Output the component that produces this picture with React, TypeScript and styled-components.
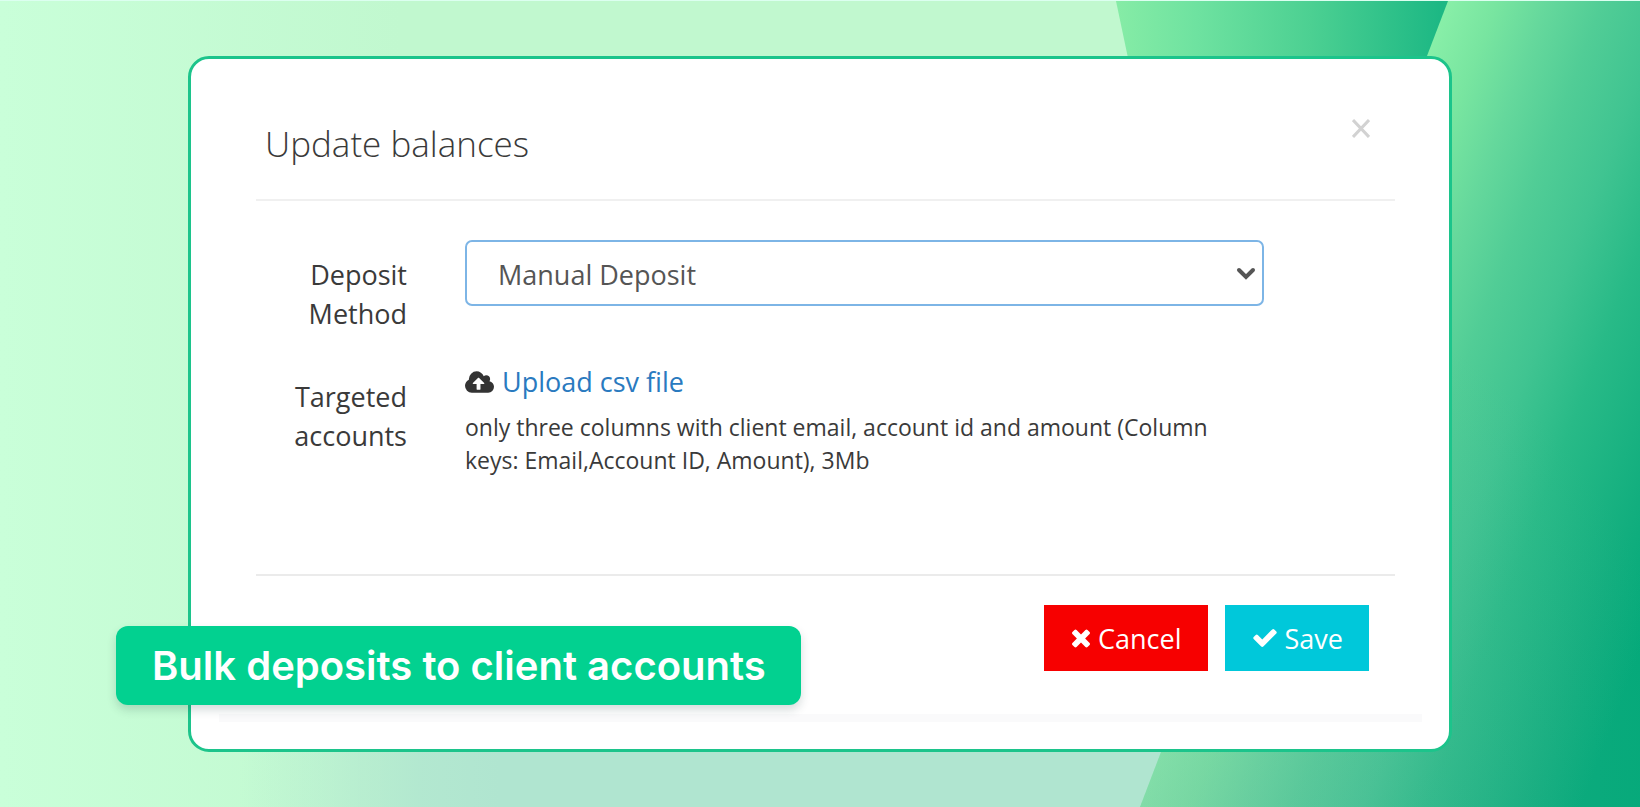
import React from "react";
import styled, { createGlobalStyle } from "styled-components";

const GlobalStyle = createGlobalStyle`
  *, *::before, *::after { box-sizing: border-box; }
  body { margin: 0; background: #c5fbd3; }
`;

const sans = `"Open Sans", "Noto Sans", sans-serif`;

const Page = styled.main`
  position: relative;
  min-height: 100vh;
  padding: 55px 188px;
  border-top: 1px solid #dcfff0;
  font-family: ${sans};
  color: #3a3a3a;
`;

const Backdrop = styled.svg`
  position: absolute;
  inset: 0;
  width: 100%;
  height: 100%;
`;

const Dialog = styled.section`
  position: relative;
  background: #ffffff;
  border: 3px solid #1cc48b;
  border-radius: 21px;
`;

const Sheet = styled.form`
  padding: 0 54px 0 65px;
`;

const Header = styled.header`
  display: flex;
  justify-content: space-between;
  align-items: flex-start;
  padding: 60px 25px 32px 9px;
  border-bottom: 2px solid #f0f0f0;
`;

const Title = styled.h1`
  margin: 0;
  font-size: 35px;
  line-height: 50px;
  margin-bottom: -2px;
  font-weight: 300;
`;

const CloseButton = styled.button`
  display: flex;
  padding: 0;
  border: 0;
  background: none;
  color: #d2d2d2;
  cursor: pointer;
`;

const Fields = styled.div`
  display: grid;
  grid-template-columns: 151px minmax(0, 1fr);
  column-gap: 58px;
  row-gap: 29px;
  padding: 39px 131px 97px 0;
`;

const Label = styled.label`
  padding-top: 15px;
  font-size: 27px;
  line-height: 39px;
  text-align: right;
`;

const SelectBox = styled.div`
  position: relative;
  height: 66px;
`;

const Select = styled.select`
  appearance: none;
  width: 100%;
  height: 66px;
  padding: 2px 48px 0 31px;
  border: 2px solid #7db5e6;
  border-radius: 7px;
  background: #ffffff;
  color: #555555;
  font-family: ${sans};
  font-size: 27px;
  outline: none;
`;

const Chevron = styled.svg`
  position: absolute;
  top: 27px;
  right: 8px;
  pointer-events: none;
`;

const UploadLine = styled.div`
  display: flex;
  align-items: center;
  gap: 8px;
  font-size: 27px;
  line-height: 39px;
`;

const UploadLink = styled.a`
  color: #2a7abf;
  text-decoration: none;
`;

const Hint = styled.p`
  margin: 10px 0 0;
  font-size: 23px;
  line-height: 33px;
`;

const Footer = styled.footer`
  display: flex;
  justify-content: flex-end;
  gap: 17px;
  padding: 29px 26px 43px;
  border-top: 2px solid #ebebeb;
`;

const Button = styled.button<{ $color: string }>`
  display: flex;
  align-items: center;
  gap: 8px;
  height: 66px;
  padding: 0 26px 0 28px;
  border: 0;
  background: ${(p) => p.$color};
  color: #ffffff;
  font-family: ${sans};
  font-size: 27px;
  cursor: pointer;
`;

const Strip = styled.div`
  height: 8px;
  margin: 0 27px 27px 28px;
  background: #fafafb;
`;

const Banner = styled.div`
  position: absolute;
  left: -75px;
  bottom: 44px;
  padding: 16px 35px 15px 36px;
  border-radius: 12px;
  background: #02d190;
  box-shadow: 0 5px 10px rgba(30, 60, 60, 0.18);
  color: #ffffff;
  font-family: Inter, sans-serif;
  font-size: 40px;
  line-height: 48px;
  font-weight: 600;
  white-space: nowrap;
`;

function Background() {
  return (
    <Backdrop viewBox="0 0 1640 807" preserveAspectRatio="none" aria-hidden="true">
      <defs>
        <linearGradient id="mint" gradientUnits="userSpaceOnUse" x1="0" y1="0" x2="400" y2="0">
          <stop offset="0" stopColor="#c9ffd9" />
          <stop offset="1" stopColor="#c1f8cf" />
        </linearGradient>
        <linearGradient id="mist" gradientUnits="userSpaceOnUse" x1="240" y1="0" x2="500" y2="0">
          <stop offset="0" stopColor="#b0e5d0" stopOpacity="0" />
          <stop offset="0.35" stopColor="#b0e5d0" stopOpacity="0.4" />
          <stop offset="0.7" stopColor="#b0e5d0" stopOpacity="0.85" />
          <stop offset="1" stopColor="#b0e5d0" />
        </linearGradient>
        <linearGradient id="band" gradientUnits="userSpaceOnUse" x1="1116" y1="0" x2="1440" y2="0">
          <stop offset="0" stopColor="#86eca6" />
          <stop offset="0.25" stopColor="#6ee2a0" />
          <stop offset="0.6" stopColor="#4cd092" />
          <stop offset="1" stopColor="#1db884" />
        </linearGradient>
        <linearGradient id="panel" gradientUnits="userSpaceOnUse" x1="1448" y1="0" x2="1885" y2="166">
          <stop offset="0" stopColor="#88efa8" />
          <stop offset="0.1" stopColor="#78e5a0" />
          <stop offset="0.2" stopColor="#65d89c" />
          <stop offset="0.31" stopColor="#51cd96" />
          <stop offset="0.44" stopColor="#40c491" />
          <stop offset="0.57" stopColor="#28ba87" />
          <stop offset="0.76" stopColor="#12ae7e" />
          <stop offset="0.88" stopColor="#03a979" />
        </linearGradient>
        <radialGradient id="shade" gradientUnits="userSpaceOnUse" cx="1140" cy="807" r="560">
          <stop offset="0" stopColor="#74b8a8" stopOpacity="0.35" />
          <stop offset="1" stopColor="#74b8a8" stopOpacity="0" />
        </radialGradient>
      </defs>
      <rect width="1640" height="807" fill="url(#mint)" />
      <rect x="200" y="500" width="1100" height="307" fill="url(#mist)" />
      <path d="M1116 0H1460V200H1158Z" fill="url(#band)" />
      <path d="M1448 0H1640V807H1140Z" fill="url(#panel)" />
      <path d="M1448 0H1640V807H1140Z" fill="url(#shade)" />
    </Backdrop>
  );
}

export default function App() {
  return (
    <>
      <GlobalStyle />
      <Page>
        <Background />
        <Dialog aria-labelledby="dialog-title">
          <Sheet onSubmit={(e) => e.preventDefault()}>
            <Header>
              <Title id="dialog-title">Update balances</Title>
              <CloseButton type="button" aria-label="Close">
                <svg width="18" height="19" viewBox="0 0 18 19" stroke="currentColor" strokeWidth="3">
                  <path d="M1 1L17 18M17 1L1 18" />
                </svg>
              </CloseButton>
            </Header>
            <Fields>
              <Label htmlFor="method">Deposit Method</Label>
              <SelectBox>
                <Select id="method" defaultValue="manual">
                  <option value="manual">Manual Deposit</option>
                </Select>
                <Chevron width="20" height="14" viewBox="0 0 20 14" fill="none" stroke="#555555" strokeWidth="4" strokeLinecap="round">
                  <path d="M3 3L10 10L17 3" />
                </Chevron>
              </SelectBox>
              <Label as="div">Targeted accounts</Label>
              <div>
                <UploadLine>
                  <svg width="29" height="22" viewBox="0 128 1920 1408" fill="#333333" aria-hidden="true">
                    <path d="M1280 928q0-14-9-23l-352-352q-9-9-23-9t-23 9l-351 351q-10 12-10 24 0 14 9 23t23 9h224v352q0 13 9.500 22.500t22.500 9.500h192q13 0 22.500-9.500t9.500-22.500v-352h224q13 0 22.500-9.500t9.500-22.500zM1920 1152q0 159-112.500 271.500t-271.500 112.500h-1088q-185 0-316.500-131.500t-131.500-316.500q0-130 70-240t188-165q-2-30-2-43 0-212 150-362t362-150q156 0 285.500 87t188.500 231q71-62 166-62 106 0 181 75t75 181q0 76-41 138 130 31 213.500 135.500t83.500 238.500z" />
                  </svg>
                  <UploadLink href="#upload">Upload csv file</UploadLink>
                </UploadLine>
                <Hint>
                  only three columns with client email, account id and amount (Column keys: Email,Account ID, Amount), 3Mb
                </Hint>
              </div>
            </Fields>
            <Footer>
              <Button type="button" $color="#f70000">
                <svg width="18" height="19" viewBox="110 366 1188 1188" fill="currentColor" aria-hidden="true">
                  <path d="M1298 1322q0 40-28 68l-136 136q-28 28-68 28t-68-28l-294-294-294 294q-28 28-68 28t-68-28l-136-136q-28-28-28-68t28-68l294-294-294-294q-28-28-28-68t28-68l136-136q28-28 68-28t68 28l294 294 294-294q28-28 68-28t68 28l136 136q28 28 28 68t-28 68l-294 294 294 294q28 28 28 68z" />
                </svg>
                Cancel
              </Button>
              <Button type="submit" $color="#00c8da">
                <svg width="24" height="18" viewBox="121 334 1550 1188" fill="currentColor" aria-hidden="true">
                  <path d="M1671 566q0 40-28 68l-724 724-136 136q-28 28-68 28t-68-28l-136-136-362-362q-28-28-28-68t28-68l136-136q28-28 68-28t68 28l294 295 656-657q28-28 68-28t68 28l136 136q28 28 28 68z" />
                </svg>
                Save
              </Button>
            </Footer>
          </Sheet>
          <Strip />
          <Banner>Bulk deposits to client accounts</Banner>
        </Dialog>
      </Page>
    </>
  );
}
